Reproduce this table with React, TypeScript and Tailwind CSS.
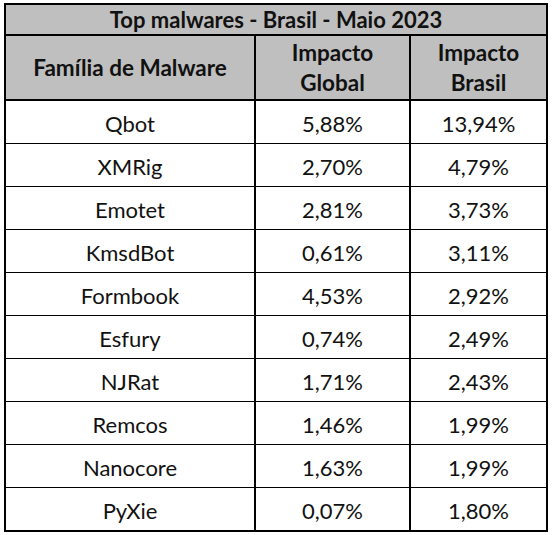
import React from 'react';

const rows = [
  ['Qbot', '5,88%', '13,94%'],
  ['XMRig', '2,70%', '4,79%'],
  ['Emotet', '2,81%', '3,73%'],
  ['KmsdBot', '0,61%', '3,11%'],
  ['Formbook', '4,53%', '2,92%'],
  ['Esfury', '0,74%', '2,49%'],
  ['NJRat', '1,71%', '2,43%'],
  ['Remcos', '1,46%', '1,99%'],
  ['Nanocore', '1,63%', '1,99%'],
  ['PyXie', '0,07%', '1,80%'],
];

export default function App() {
  return (
    <div
      className="w-[552px] h-[535px] bg-white pt-[3px] pl-[4px] text-[#111]"
      style={{ fontFamily: 'Lato, "Open Sans", sans-serif' }}
    >
      <div className="w-[544px] border-2 border-black">
        <div className="h-[31px] bg-[#bfbfbf] border-b-2 border-black flex items-center justify-center text-[22px] font-bold leading-none pt-[1px]">
          Top malwares - Brasil - Maio 2023
        </div>
        <div className="grid grid-cols-[250px_155px_135px] h-[65px] bg-[#bfbfbf] border-b-2 border-black text-[22.5px] font-bold leading-[30px]">
          <div className="border-r-2 border-black flex items-center justify-center">
            Família de Malware
          </div>
          <div className="border-r-2 border-black flex flex-col items-center justify-center">
            <span>Impacto</span>
            <span>Global</span>
          </div>
          <div className="flex flex-col items-center justify-center">
            <span>Impacto</span>
            <span>Brasil</span>
          </div>
        </div>
        {rows.map((r, i) => (
          <div
            key={r[0]}
            className={
              'grid grid-cols-[250px_155px_135px] h-[42px] text-[22px] ' +
              (i < rows.length - 1 ? 'border-b border-black box-content' : '')
            }
          >
            <div className="border-r-2 border-black flex items-center justify-center pt-[2px]">
              {r[0]}
            </div>
            <div className="border-r-2 border-black flex items-center justify-center pt-[2px]">
              {r[1]}
            </div>
            <div className="flex items-center justify-center pt-[2px]">{r[2]}</div>
          </div>
        ))}
      </div>
    </div>
  );
}
